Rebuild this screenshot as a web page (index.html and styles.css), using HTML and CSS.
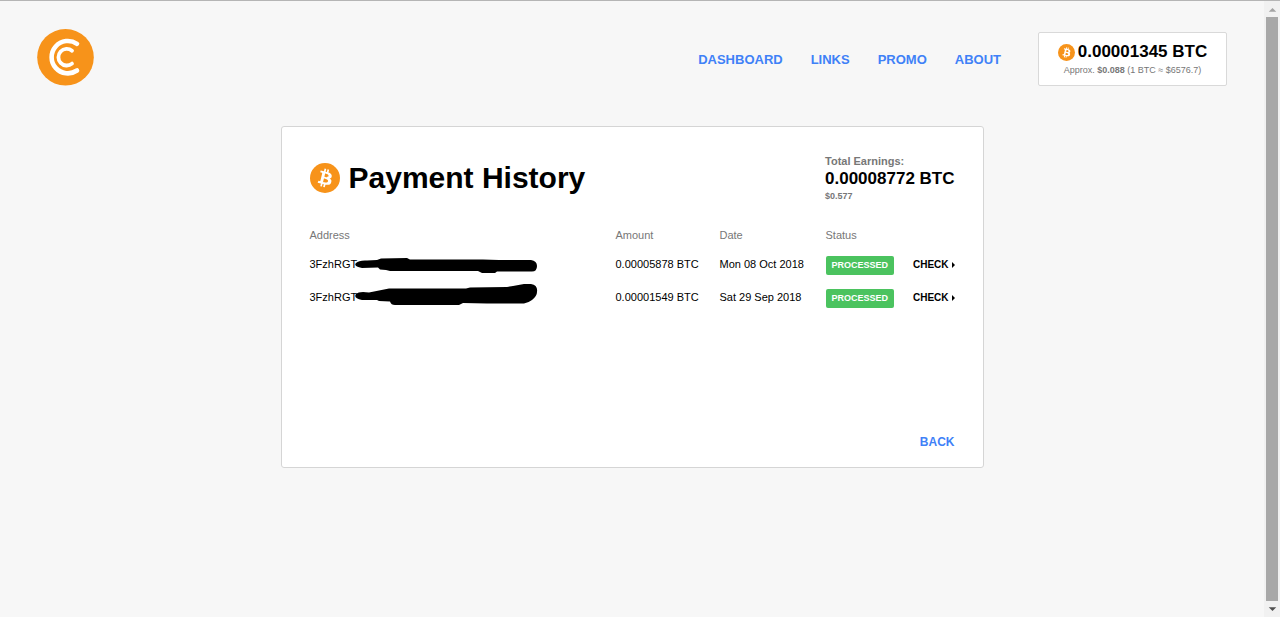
FILE: index.html
```html
<!DOCTYPE html>
<html lang="en">
<head>
<meta charset="utf-8">
<title>Payment History</title>
<link rel="stylesheet" href="styles.css">
</head>
<body>
<svg class="symbols" aria-hidden="true">
  <symbol id="bitcoin" viewBox="0 0 32 32">
    <circle cx="16" cy="16" r="16" fill="#f7931a"/>
    <path fill="#fff" d="M23.19 14.02c.31-2.1-1.28-3.22-3.47-3.98l.71-2.84-1.73-.43-.69 2.77-1.38-.33.69-2.79-1.73-.43-.71 2.84-1.1-.26-2.39-.6-.46 1.85s1.28.3 1.26.32c.7.17.82.63.8 1l-.8 3.23.18.06-.18-.05-1.13 4.53c-.09.21-.3.53-.79.41l-1.26-.31-.86 1.98 2.25.56 1.24.32-.72 2.88 1.73.43.71-2.85 1.38.36-.71 2.83 1.73.43.72-2.87c2.95.56 5.17.33 6.1-2.33.75-2.15-.04-3.39-1.59-4.19 1.13-.26 1.98-1 2.2-2.54zm-3.95 5.54c-.53 2.15-4.15.99-5.32.7l.95-3.81c1.17.29 4.93.87 4.37 3.11zm.53-5.57c-.48 1.95-3.5.96-4.47.72l.86-3.46c.98.24 4.12.7 3.61 2.74z"/>
  </symbol>
</svg>
<div class="page">
  <header class="header">
    <a class="logo" href="#" aria-label="Home">
      <svg viewBox="0 0 57 57" width="57" height="57" aria-hidden="true">
        <circle cx="28.500" cy="28.300" r="28.300" fill="#f7931a"/>
        <g fill="none" stroke="#fff" stroke-linecap="round">
          <path stroke-width="4.600" d="M40 14.800A16.200 16.200 0 1 0 40 41.500"/>
          <path stroke-width="3.800" d="M35 21.800A8.300 8.300 0 1 0 35 34.600"/>
        </g>
      </svg>
    </a>
    <nav class="nav">
      <a href="#">DASHBOARD</a>
      <a href="#">LINKS</a>
      <a href="#">PROMO</a>
      <a href="#">ABOUT</a>
    </nav>
    <div class="balance">
      <div class="balance-amount"><svg class="coin" aria-hidden="true"><use href="#bitcoin"/></svg>0.00001345 BTC</div>
      <div class="balance-approx">Approx. <b>$0.088</b> (1 BTC ≈ $6576.7)</div>
    </div>
  </header>
  <main class="card">
    <div class="card-head">
      <h1><svg class="coin-large" aria-hidden="true"><use href="#bitcoin"/></svg>Payment History</h1>
      <div class="earnings">
        <div class="earnings-label">Total Earnings:</div>
        <div class="earnings-total">0.00008772 BTC</div>
        <div class="earnings-usd">$0.577</div>
      </div>
    </div>
    <table class="payments">
      <thead>
        <tr><th class="col-address">Address</th><th class="col-amount">Amount</th><th class="col-date">Date</th><th class="col-status">Status</th><th></th></tr>
      </thead>
      <tbody>
        <tr>
          <td><div class="address">3FzhRGT<svg class="redaction" viewBox="0 0 184 22" aria-hidden="true"><path d="M3 10Q6 7 14 7.500L24 7 28 5.500 54 5 57 6.500 130 6.500 146 7 178 7Q184 8 184 13 184 19 178 18.500L144 18.500 142 20 129 20 125 18 37 18 33 17 27 16.500 25 14.500 9 15Q0 13 3 10Z"/></svg></div></td>
          <td>0.00005878 BTC</td><td>Mon 08 Oct 2018</td>
          <td><span class="badge">PROCESSED</span></td>
          <td class="check"><a href="#">CHECK<span class="arrow"></span></a></td>
        </tr>
        <tr>
          <td><div class="address">3FzhRGT<svg class="redaction" viewBox="0 0 184 22" aria-hidden="true"><path d="M3 8Q6 5 16 6.500L36 2.500 113 2.500 117 1.500 154 1 160 0 171 -2 178 -2Q185 -1 184 6 184 10 179 14 175 17 171 17.500L134 17.500 110 17 106 19 42 19Q38 19 37 15.500L26 15 24 14 9 14Q0 12 3 8Z"/></svg></div></td>
          <td>0.00001549 BTC</td><td>Sat 29 Sep 2018</td>
          <td><span class="badge">PROCESSED</span></td>
          <td class="check"><a href="#">CHECK<span class="arrow"></span></a></td>
        </tr>
      </tbody>
    </table>
    <a class="back" href="#">BACK</a>
  </main>
</div>
<div class="scrollbar" aria-hidden="true">
  <svg viewBox="0 0 16 16"><path fill="#a3a3a3" d="M4 11L8 7 12 11Z"/></svg>
  <div class="thumb"></div>
  <svg viewBox="0 0 16 16"><path fill="#505050" d="M4 6L8 10 12 6Z"/></svg>
</div>
</body>
</html>
```
FILE: styles.css
```css
* { box-sizing: border-box; }

body {
  display: flex;
  min-height: 100vh;
  margin: 0;
  border-top: 1px solid #b5b5b5;
  background: #f7f7f7;
  color: #000;
  font-family: "Liberation Sans", Arial, sans-serif;
  font-size: 11px;
}

a { color: #3f81f7; font-weight: bold; text-decoration: none; }

.symbols { position: absolute; width: 0; height: 0; }

.page { flex: 1; padding: 28px 37px 0; }

.header { display: flex; align-items: center; height: 57px; }
.logo { display: block; height: 57px; margin-right: auto; }

.nav { display: flex; gap: 28px; margin-right: 37px; padding-top: 4px; font-size: 13px; }

.balance {
  align-self: flex-end;
  min-width: 189px;
  padding: 9px 18px 7px;
  border: 1px solid #d9d9d9;
  border-radius: 2px;
  background: #fff;
  text-align: center;
}
.balance-amount {
  display: flex;
  align-items: center;
  justify-content: center;
  gap: 3px;
  font-size: 17px;
  font-weight: bold;
  line-height: 20px;
}
.coin { width: 17px; height: 17px; }
.balance-approx { color: #777; font-size: 9px; line-height: 16px; }

.card {
  display: flex;
  flex-direction: column;
  max-width: 703px;
  min-height: 342px;
  margin: 40px auto 0;
  padding: 26px 28px 17px;
  border: 1px solid #d5d5d5;
  border-radius: 3px;
  background: #fff;
}
.card-head { display: flex; justify-content: space-between; }

h1 {
  display: flex;
  align-items: center;
  gap: 9px;
  height: 50px;
  margin: 0;
  font-size: 30px;
}
.coin-large { width: 30px; height: 30px; }

.earnings { color: #777; font-weight: bold; }
.earnings-label { line-height: 16px; }
.earnings-total { color: #000; font-size: 17px; line-height: 20px; }
.earnings-usd { font-size: 9px; line-height: 14px; }

.payments {
  width: 100%;
  margin-top: 20px;
  border-collapse: collapse;
  table-layout: fixed;
}
.payments th { height: 24px; padding: 0; color: #777; font-weight: normal; text-align: left; }
.payments td { height: 33px; padding: 0; }
.col-address { width: 306px; }
.col-amount { width: 104px; }
.col-date { width: 106px; }
.col-status { width: 70px; }

.address { display: flex; align-items: center; height: 22px; }
.redaction { width: 184px; height: 22px; margin-left: -4px; overflow: visible; }

.badge {
  display: block;
  width: fit-content;
  margin-top: 3px;
  padding: 0 6px;
  border-radius: 2px;
  background: #4bc35f;
  color: #fff;
  font-size: 9px;
  font-weight: bold;
  line-height: 19px;
}
.payments .check { text-align: right; }
.check a { color: #000; font-size: 10px; }
.arrow {
  display: inline-block;
  margin-left: 3px;
  border: solid transparent;
  border-width: 3px 0 3px 3px;
  border-left-color: #000;
}

.back { align-self: flex-end; margin-top: auto; font-size: 12px; line-height: 16px; }

.scrollbar {
  display: flex;
  flex-direction: column;
  width: 16px;
  padding-left: 1px;
  background: #f1f1f1;
}
.scrollbar svg { width: 15px; height: 16px; }
.thumb { flex: 1; margin: 0 2px 0 1px; background: #a8a8a8; }
```
